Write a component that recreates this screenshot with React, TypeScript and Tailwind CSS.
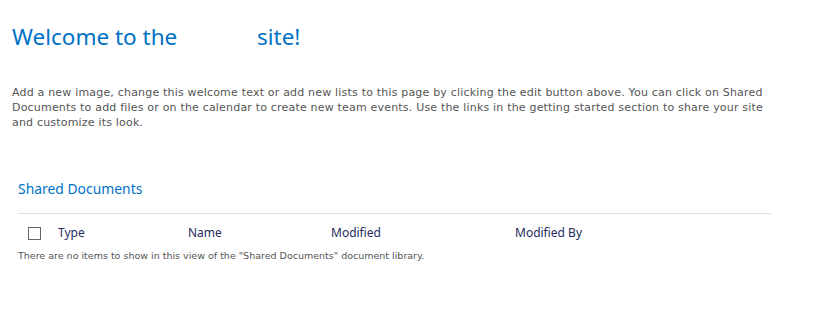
export default function App() {
  const cols = [
    { label: "Type", w: "w-[130px]" },
    { label: "Name", w: "w-[143px]" },
    { label: "Modified", w: "w-[184px]" },
    { label: "Modified By", w: "w-[120px]" },
  ];

  return (
    <div className="w-[826px] h-[310px] bg-white overflow-hidden">
      <div className="pl-3 pt-[22px]">
        <h1 className="font-['Noto_Sans',sans-serif] text-[22.5px] leading-[30px] text-[#0072c6]">
          Welcome to the <span className="inline-block w-[68px]" /> site!
        </h1>

        <p className="mt-[33px] w-[770px] font-['DejaVu_Sans',Verdana,sans-serif] text-[11px] tracking-[0.19px] leading-[15px] text-[#555]">
          Add a new image, change this welcome text or add new lists to this page by clicking the edit button above. You
          can click on Shared Documents to add files or on the calendar to create new team events. Use the links in the
          getting started section to share your site and customize its look.
        </p>
      </div>

      {/* Shared Documents web part */}
      <div className="mt-[50px] pl-[18px] w-[771px]">
        <h2 className="font-['Noto_Sans',sans-serif] text-[13.9px] leading-[18px] text-[#0072c6]">Shared Documents</h2>

        <div className="mt-[15px] border-t border-[#e1e1e1]">
          <div className="flex items-center h-[37px] pl-[10px] font-['Noto_Sans',sans-serif] text-[12px] text-[#262b5c]">
            <span className="w-[13px] h-[13px] border border-[#666] mr-[17px] mt-[1px]" />
            {cols.map((c) => (
              <span key={c.label} className={c.w}>
                {c.label}
              </span>
            ))}
          </div>
          <p className="-mt-[2px] font-['DejaVu_Sans',Verdana,sans-serif] text-[9.5px] leading-[14px] text-[#555]">
            There are no items to show in this view of the "Shared Documents" document library.
          </p>
        </div>
      </div>
    </div>
  );
}
